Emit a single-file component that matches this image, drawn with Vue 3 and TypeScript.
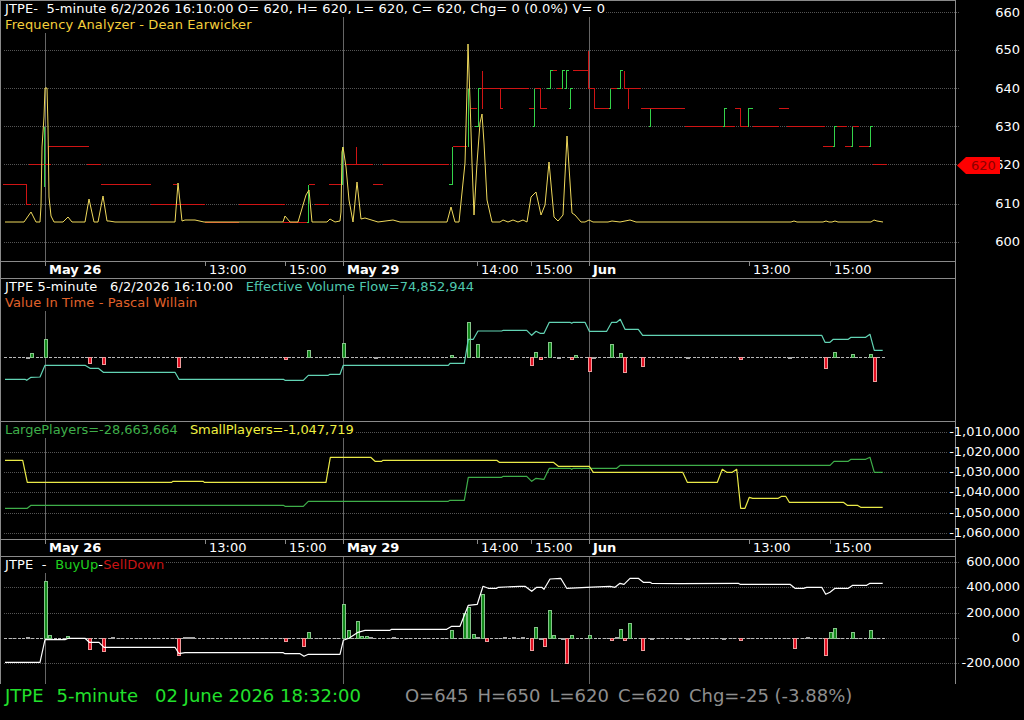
<script setup lang="ts">
interface LegendPart {
  text: string
  tone: string
}
interface Bar {
  x: number
  h: number
}
interface Pane {
  id: string
  top: number
  height: number
  legend: LegendPart[][]
  grid: number[]
  gridEnd: number
  labels: { y: number; text: string }[]
  zero?: number
  bars?: Bar[]
  lines: { d: string; color: string }[]
  steps?: { d: string; color: string }[]
  timeAxis?: boolean
}

// traced off the 3x crops, so points are given as crop px + crop origin
const trace = (ox: number, oy: number, s: string) =>
  s
    .trim()
    .split(/\s+/)
    .map((p) => {
      const [x, y] = p.split(',').map(Number)
      return `${(ox + x / 3).toFixed(1)},${(oy + y / 3).toFixed(1)}`
    })
    .join(' ')

// step lines sit on whole, even pixels
const even = (n: number) => n - (n % 2)
const snap = (s: string) =>
  s
    .split(' ')
    .map((p) => {
      const [x, y] = p.split(',').map(Number)
      return `${even(x) + 0.5},${even(y) + 0.5}`
    })
    .join(' ')

const RED = '#d01414'
const GREEN = '#34d24a'

const redSteps = [
  '3,185 27,185 27,204 30,204',
  '28,165 50,165',
  '49,165 49,146 88,146',
  '86,165 101,165',
  '101,185 150,185',
  '150,204 204,204',
  '172,185 177,185',
  '204,223 239,223',
  '239,204 285,204',
  '283,223 306,223',
  '309,185 315,185',
  '315,204 329,204',
  '328,185 340,185',
  '345,165 372,165',
  '357,146 357,165',
  '373,185 382,185',
  '382,165 449,165',
  '452,146 466,146',
  '470,108 476,108',
  '483,70 483,108',
  '480,89 529,89',
  '501,89 501,108 503,108',
  '529,108 534,108',
  '535,89 540,89 540,108 547,108',
  '552,70 556,70',
  '556,89 562,89',
  '573,70 589,70',
  '589,50 589,89 594,89 594,108 609,108',
  '611,89 620,89',
  '624,70 624,89 641,89',
  '629,89 629,108',
  '640,108 685,108',
  '684,127 724,127 734,127',
  '734,108 741,108 741,127 748,127',
  '752,127 779,127',
  '779,108 788,108',
  '787,127 824,127',
  '823,146 832,146',
  '837,127 846,127',
  '845,146 850,146',
  '853,127 859,127',
  '859,146 868,146',
  '872,165 887,165',
]

const greenSteps = [
  '45,186 45,127',
  '306,223 309,223 309,185',
  '343,185 343,147',
  '449,185 452,185 452,146',
  '468,146 468,89',
  '475,127 478,127 478,89 480,89',
  '533,127 535,127 535,89',
  '547,89 550,89 550,70 552,70',
  '562,89 562,70 564,70',
  '564,89 566,89 566,70 569,70',
  '569,108 571,108 571,89 573,89',
  '609,108 611,108 611,89',
  '617,89 620,89 620,70 623,70',
  '649,127 651,127 651,108',
  '722,127 724,127 724,108 726,108',
  '748,127 749,127 749,108 752,108',
  '832,146 835,146 835,127 837,127',
  '850,146 853,146 853,127',
  '868,146 871,146 871,127 873,127',
]

const frequency =
  '5,222 24,222 31,212 36,222 40,222 41,206 42,147 44,117 45,88 47,88 48,127 49,197 51,216 54,222 63,222 68,217 72,222 85,222 89,199 94,222 98,222 103,196 107,221 109,221 115,222 175,222 178,183 182,221 185,220 195,220 204,222 283,222 285,216 290,222 298,222 306,195 309,190 312,222 327,222 330,219 335,222 340,221 341,212 342,152 343,147 346,167 349,200 353,222 357,182 361,219 365,218 378,222 393,220 400,222 447,222 451,207 455,222 459,222 465,163 467,90 468,44 470,100 472,163 474,215 477,163 480,123 482,114 484,143 487,200 492,222 500,222 503,220 508,222 513,220 518,222 523,220 527,222 531,197 536,192 541,215 545,205 549,162 554,217 558,221 563,215 567,136 572,213 575,215 581,222 585,222 589,220 593,222 608,222 612,221 620,222 630,220 636,222 791,222 794,221 797,222 823,222 826,221 829,222 832,222 835,221 838,222 871,222 874,220 877,221 883,222'

const flowBars: Bar[] = [
  { x: 28, h: -1 }, { x: 32, h: 4 }, { x: 46, h: 18 }, { x: 90, h: -6 }, { x: 104, h: -7 },
  { x: 179, h: -10 }, { x: 286, h: -2 }, { x: 309, h: 7 }, { x: 344, h: 14 }, { x: 376, h: -1 },
  { x: 452, h: 2 }, { x: 469, h: 35 }, { x: 478, h: 13 }, { x: 532, h: -8 }, { x: 536, h: 5 },
  { x: 541, h: -2 }, { x: 550, h: 15 }, { x: 559, h: -1 }, { x: 572, h: -2 }, { x: 576, h: 2 },
  { x: 590, h: -14 }, { x: 594, h: -1 }, { x: 612, h: 13 }, { x: 621, h: 4 }, { x: 625, h: -15 },
  { x: 643, h: -9 }, { x: 688, h: -1 }, { x: 741, h: -2 }, { x: 790, h: -1 }, { x: 826, h: -11 },
  { x: 835, h: 5 }, { x: 853, h: 3 }, { x: 871, h: 3 }, { x: 875, h: -24 },
]

const pressureBars: Bar[] = [
  { x: 28, h: 1 }, { x: 46, h: 57 }, { x: 50, h: 3 }, { x: 68, h: 2 }, { x: 90, h: -11 },
  { x: 104, h: -13 }, { x: 113, h: 1 }, { x: 179, h: -17 }, { x: 185, h: 1 }, { x: 189, h: 1 },
  { x: 193, h: 1 }, { x: 286, h: -3 }, { x: 304, h: -8 }, { x: 309, h: 6 }, { x: 344, h: 34 },
  { x: 349, h: 8 }, { x: 358, h: 17 }, { x: 362, h: 2 }, { x: 367, h: 2 }, { x: 371, h: 1 },
  { x: 394, h: 1 }, { x: 452, h: 8 }, { x: 465, h: 25 }, { x: 469, h: 31 }, { x: 474, h: 4 },
  { x: 478, h: 1 }, { x: 483, h: 44 }, { x: 487, h: -3 }, { x: 505, h: 1 }, { x: 514, h: 1 },
  { x: 523, h: 1 }, { x: 532, h: -12 }, { x: 536, h: 11 }, { x: 541, h: -1 }, { x: 545, h: -8 },
  { x: 550, h: 28 }, { x: 554, h: 3 }, { x: 563, h: -1 }, { x: 567, h: -25 }, { x: 572, h: 3 },
  { x: 590, h: 3 }, { x: 612, h: -2 }, { x: 617, h: 1 }, { x: 621, h: 9 }, { x: 625, h: -2 },
  { x: 630, h: 15 }, { x: 643, h: -12 }, { x: 652, h: -1 }, { x: 688, h: -1 }, { x: 724, h: -1 },
  { x: 741, h: -2 }, { x: 795, h: -10 }, { x: 808, h: 1 }, { x: 826, h: -17 }, { x: 831, h: 6 },
  { x: 835, h: 10 }, { x: 853, h: 6 }, { x: 871, h: 8 },
]

const panes: Pane[] = [
  {
    id: 'price',
    top: 0,
    height: 261,
    legend: [
      [{ text: 'JTPE-  5-minute 6/2/2026 16:10:00 O= 620, H= 620, L= 620, C= 620, Chg= 0 (0.0%) V= 0', tone: 'white' }],
      [{ text: 'Frequency Analyzer - Dean Earwicker', tone: 'amber' }],
    ],
    grid: [12, 50, 88, 126, 164, 204, 242],
    gridEnd: 960,
    labels: [
      { y: 13, text: '660' },
      { y: 50, text: '650' },
      { y: 89, text: '640' },
      { y: 127, text: '630' },
      { y: 165, text: '620' },
      { y: 204, text: '610' },
      { y: 242, text: '600' },
    ],
    lines: [{ d: frequency, color: '#efd95c' }],
    steps: [
      ...redSteps.map((d) => ({ d: snap(d), color: RED })),
      ...greenSteps.map((d) => ({ d: snap(d), color: GREEN })),
    ],
    timeAxis: true,
  },
  {
    id: 'flow',
    top: 278,
    height: 143,
    legend: [
      [
        { text: 'JTPE 5-minute   6/2/2026 16:10:00   ', tone: 'white' },
        { text: 'Effective Volume Flow=74,852,944', tone: 'teal' },
      ],
      [{ text: 'Value In Time - Pascal Willain', tone: 'orange' }],
    ],
    grid: [],
    gridEnd: 960,
    labels: [],
    zero: 357,
    bars: flowBars,
    lines: [
      {
        d: [
          trace(0, 260, '15,358 75,358 80,361 93,352 120,351 135,316 255,316 270,325 295,325 310,337 525,337 537,358 850,358 855,361 910,361 925,346 985,346 990,343 1020,343'),
          trace(340, 260, '10,316 325,316 330,310 373,310 385,238 400,238 414,213 485,213 490,211 560,211 575,226 588,214 600,220 612,220 628,187 690,187 695,190 700,187 735,187 748,214 800,214 815,187 830,187 841,178 855,208 895,208 908,226 1020,226'),
          trace(680, 260, '425,226 435,247 450,247 460,238 505,238 513,232 557,232 570,223 583,271 608,271'),
        ].join(' '),
        color: '#62d3b4',
      },
    ],
  },
  {
    id: 'players',
    top: 421,
    height: 118,
    legend: [
      [
        { text: 'LargePlayers=-28,663,664  ', tone: 'green' },
        { text: ' SmallPlayers=-1,047,719', tone: 'yellow' },
      ],
    ],
    grid: [432, 452, 472, 492, 513, 533],
    gridEnd: 948,
    labels: [
      { y: 432, text: '-1,010,000' },
      { y: 452, text: '-1,020,000' },
      { y: 472, text: '-1,030,000' },
      { y: 492, text: '-1,040,000' },
      { y: 513, text: '-1,050,000' },
      { y: 533, text: '-1,060,000' },
    ],
    lines: [
      {
        d: [
          trace(0, 420, '15,265 82,265 93,256 850,256 855,259 910,259 925,244 1020,244'),
          trace(340, 420, '325,244 330,241 373,241 385,172 485,172 490,169 560,169 575,184 588,175 612,178 628,145 690,145 695,148 700,145 830,145 841,136 1020,136'),
          trace(680, 420, '450,136 462,124 505,124 513,118 557,118 570,112 583,157 608,157'),
        ].join(' '),
        color: '#3fae4a',
      },
      {
        d: [
          trace(0, 420, '15,121 68,121 82,187 515,187 518,184 610,184 613,187 978,187 991,112 1020,112'),
          trace(340, 420, '92,112 105,124 125,124 128,121 470,121 478,127 640,127 655,139 748,139 760,157 1020,157'),
          trace(680, 420, '8,157 22,187 112,187 127,148 140,157 157,157 170,148 182,265 195,265 208,232 218,235 295,235 305,229 317,229 328,247 490,247 502,256 532,256 542,262 608,262'),
        ].join(' '),
        color: '#eaea48',
      },
    ],
    timeAxis: true,
  },
  {
    id: 'pressure',
    top: 556,
    height: 128,
    legend: [
      [
        { text: 'JTPE  -  ', tone: 'white' },
        { text: 'BuyUp', tone: 'lime' },
        { text: '-', tone: 'white' },
        { text: 'SellDown', tone: 'red' },
      ],
    ],
    grid: [562, 587, 613, 638, 663],
    gridEnd: 960,
    labels: [
      { y: 562, text: '600,000' },
      { y: 587, text: '400,000' },
      { y: 613, text: '200,000' },
      { y: 638, text: '0' },
      { y: 663, text: '-200,000' },
    ],
    zero: 638,
    bars: pressureBars,
    lines: [
      {
        d: [
          trace(0, 555, '15,322 120,322 135,254 195,254 205,250 255,250 268,262 297,262 312,277 525,277 537,296 555,293 850,293 855,296 900,296 912,304 925,298 1020,298'),
          trace(340, 555, '10,256 27,250 54,232 75,226 150,226 155,223 320,223 335,214 360,214 385,151 412,148 429,94 445,100 470,100 475,97 540,94 555,94 575,109 590,97 605,97 612,103 630,72 662,70 680,100 740,97 810,94 825,97 840,85 852,88 870,70 895,70 910,82 930,82 935,85 1020,86'),
          trace(680, 555, '175,85 180,88 330,88 345,100 370,100 380,97 425,97 437,118 450,112 465,100 505,100 518,91 560,91 570,85 608,85'),
        ].join(' '),
        color: '#ffffff',
      },
    ],
  },
]

const cursors = [45, 343, 589]

const timeTicks = [
  { x: 45, text: 'May 26', major: true },
  { x: 205, text: '13:00', major: false },
  { x: 285, text: '15:00', major: false },
  { x: 343, text: 'May 29', major: true },
  { x: 477, text: '14:00', major: false },
  { x: 531, text: '15:00', major: false },
  { x: 589, text: 'Jun', major: true },
  { x: 749, text: '13:00', major: false },
  { x: 830, text: '15:00', major: false },
]

const barY = (zero: number, b: Bar) => (b.h > 0 ? zero - b.h : zero) + 0.5
const barTone = (b: Bar) => (Math.abs(b.h) <= 1 ? 'bar-flat' : b.h > 0 ? 'bar-up' : 'bar-down')
</script>

<template>
  <div class="chart">
    <template v-for="pane in panes" :key="pane.id">
      <section class="pane" :class="`pane-${pane.id}`" :style="{ height: pane.height + 'px' }">
        <svg
          class="canvas"
          :width="1024"
          :height="pane.height"
          :viewBox="`0 ${pane.top} 1024 ${pane.height}`"
        >
          <line
            v-for="y in pane.grid"
            :key="y"
            class="grid"
            x1="4"
            :x2="pane.gridEnd"
            :y1="y + 0.5"
            :y2="y + 0.5"
          />
          <line
            v-for="x in cursors"
            :key="x"
            class="cursor"
            :x1="x + 0.5"
            :x2="x + 0.5"
            :y1="pane.top"
            :y2="pane.top + pane.height"
          />
          <line
            v-if="pane.zero"
            class="zero"
            x1="4"
            x2="886"
            :y1="pane.zero + 0.5"
            :y2="pane.zero + 0.5"
          />
          <template v-if="pane.zero">
            <rect
              v-for="b in pane.bars"
              :key="b.x"
              :class="barTone(b)"
              :x="b.x - 1.5"
              :y="barY(pane.zero, b)"
              width="3"
              :height="Math.abs(b.h)"
            />
          </template>
          <polyline
            v-for="(s, i) in pane.steps"
            :key="i"
            class="step"
            :points="s.d"
            :stroke="s.color"
          />
          <polyline
            v-for="(l, i) in pane.lines"
            :key="'l' + i"
            class="trace"
            :points="l.d"
            :stroke="l.color"
          />
        </svg>

        <div class="plot">
          <div v-for="(row, i) in pane.legend" :key="i" class="legend-row">
            <span v-for="part in row" :key="part.text" :class="part.tone">{{ part.text }}</span>
          </div>
        </div>

        <div class="scale">
          <span
            v-for="l in pane.labels"
            :key="l.text"
            class="tick"
            :style="{ top: l.y - pane.top + 'px' }"
          >{{ l.text }}</span>
          <span v-if="pane.id === 'price'" class="price-tag">620</span>
        </div>
      </section>

      <div v-if="pane.timeAxis" class="time-axis">
        <span
          v-for="t in timeTicks"
          :key="t.x"
          class="time-tick"
          :class="{ major: t.major }"
          :style="{ left: t.x - 1 + 'px' }"
        >{{ t.text }}</span>
      </div>
    </template>

    <footer class="status">
      <span class="now s-symbol">JTPE</span>
      <span class="now s-period">5-minute</span>
      <span class="now s-date">02 June 2026 18:32:00</span>
      <span class="quote s-open">O=645</span>
      <span class="quote s-next">H=650</span>
      <span class="quote s-next">L=620</span>
      <span class="quote s-next">C=620</span>
      <span class="quote s-next">Chg=-25 (-3.88%)</span>
    </footer>
  </div>
</template>

<style scoped>
.chart {
  width: 1024px;
  height: 720px;
  background: #000;
  display: flex;
  flex-direction: column;
  overflow: hidden;
  font-family: "DejaVu Sans", Verdana, sans-serif;
  font-size: 13px;
  color: #fff;
}

.pane {
  display: grid;
  grid-template-columns: 956px 68px;
  flex-shrink: 0;
}

.canvas {
  grid-area: 1 / 1 / 2 / 3;
  display: block;
}

.plot {
  grid-area: 1 / 1;
  box-sizing: border-box;
  border-top: 1px solid #8a8a8a;
  border-left: 1px solid #8a8a8a;
  border-right: 1px solid #8a8a8a;
  z-index: 1;
}

.legend-row {
  width: fit-content;
  height: 16px;
  line-height: 16px;
  padding: 0 1px 0 4px;
  background: #000;
  white-space: pre;
  letter-spacing: 0.12px;
}

.white { color: #fff; }
.amber { color: #f5cf3c; }
.teal { color: #4fc8ae; letter-spacing: 0; }
.orange { color: #e0622a; }
.green { color: #3fae4a; letter-spacing: -0.05px; }
.yellow { color: #f0f040; letter-spacing: -0.05px; }
.lime { color: #1fd01f; }
.red { color: #c81414; }

.grid {
  stroke: #555;
  stroke-width: 1;
  stroke-dasharray: 1 1;
  shape-rendering: crispEdges;
}

.cursor {
  stroke: #666;
  stroke-width: 1;
  shape-rendering: crispEdges;
}

.zero {
  stroke: #b8b8b8;
  stroke-width: 1;
  stroke-dasharray: 3 1.5;
  shape-rendering: crispEdges;
}

.bar-up {
  fill: #138a1c;
  stroke: #86c48a;
  shape-rendering: crispEdges;
}
.bar-down {
  fill: #e21022;
  stroke: #ec9c9c;
  shape-rendering: crispEdges;
}
.bar-flat {
  fill: #9a9a9a;
  stroke: #a8a8a8;
  shape-rendering: crispEdges;
}

.step {
  fill: none;
  stroke-width: 1;
  shape-rendering: crispEdges;
}

.trace {
  fill: none;
  stroke-width: 1.2;
  stroke-linejoin: round;
}
.pane-price .trace {
  stroke-width: 1;
}

.scale {
  grid-area: 1 / 2;
  position: relative;
  z-index: 1;
}

.tick {
  position: absolute;
  right: 4px;
  transform: translateY(-50%);
  line-height: 16px;
  white-space: nowrap;
}

.price-tag {
  position: absolute;
  left: 1px;
  top: 157px;
  width: 43px;
  height: 17px;
  box-sizing: border-box;
  padding-left: 14px;
  line-height: 17px;
  background: #f00;
  color: #8c0000;
  clip-path: polygon(0 50%, 9px 0, 100% 0, 100% 100%, 9px 100%);
}

.time-axis {
  position: relative;
  width: 956px;
  height: 17px;
  flex-shrink: 0;
  box-sizing: border-box;
  border-top: 1px solid #8a8a8a;
  border-left: 1px solid #8a8a8a;
  border-right: 1px solid #8a8a8a;
}

.time-tick {
  position: absolute;
  top: 0;
  padding-left: 4px;
  line-height: 16px;
  white-space: nowrap;
}
.time-tick::before {
  content: "";
  position: absolute;
  left: 0;
  top: 0;
  width: 1px;
  height: 4px;
  background: #8a8a8a;
}
.time-tick.major {
  font-weight: 700;
}

.status {
  height: 36px;
  flex-shrink: 0;
  display: flex;
  align-items: flex-start;
  padding-left: 5px;
  font-size: 18px;
  line-height: 23px;
  white-space: nowrap;
}
.now { color: #22e02c; }
.quote { color: #8e8e8e; }
.s-period { margin-left: 13px; }
.s-date { margin-left: 17px; }
.s-open { margin-left: 44px; }
.s-next { margin-left: 9px; }
</style>

<style>
html,
body {
  margin: 0;
  background: #000;
}
</style>
